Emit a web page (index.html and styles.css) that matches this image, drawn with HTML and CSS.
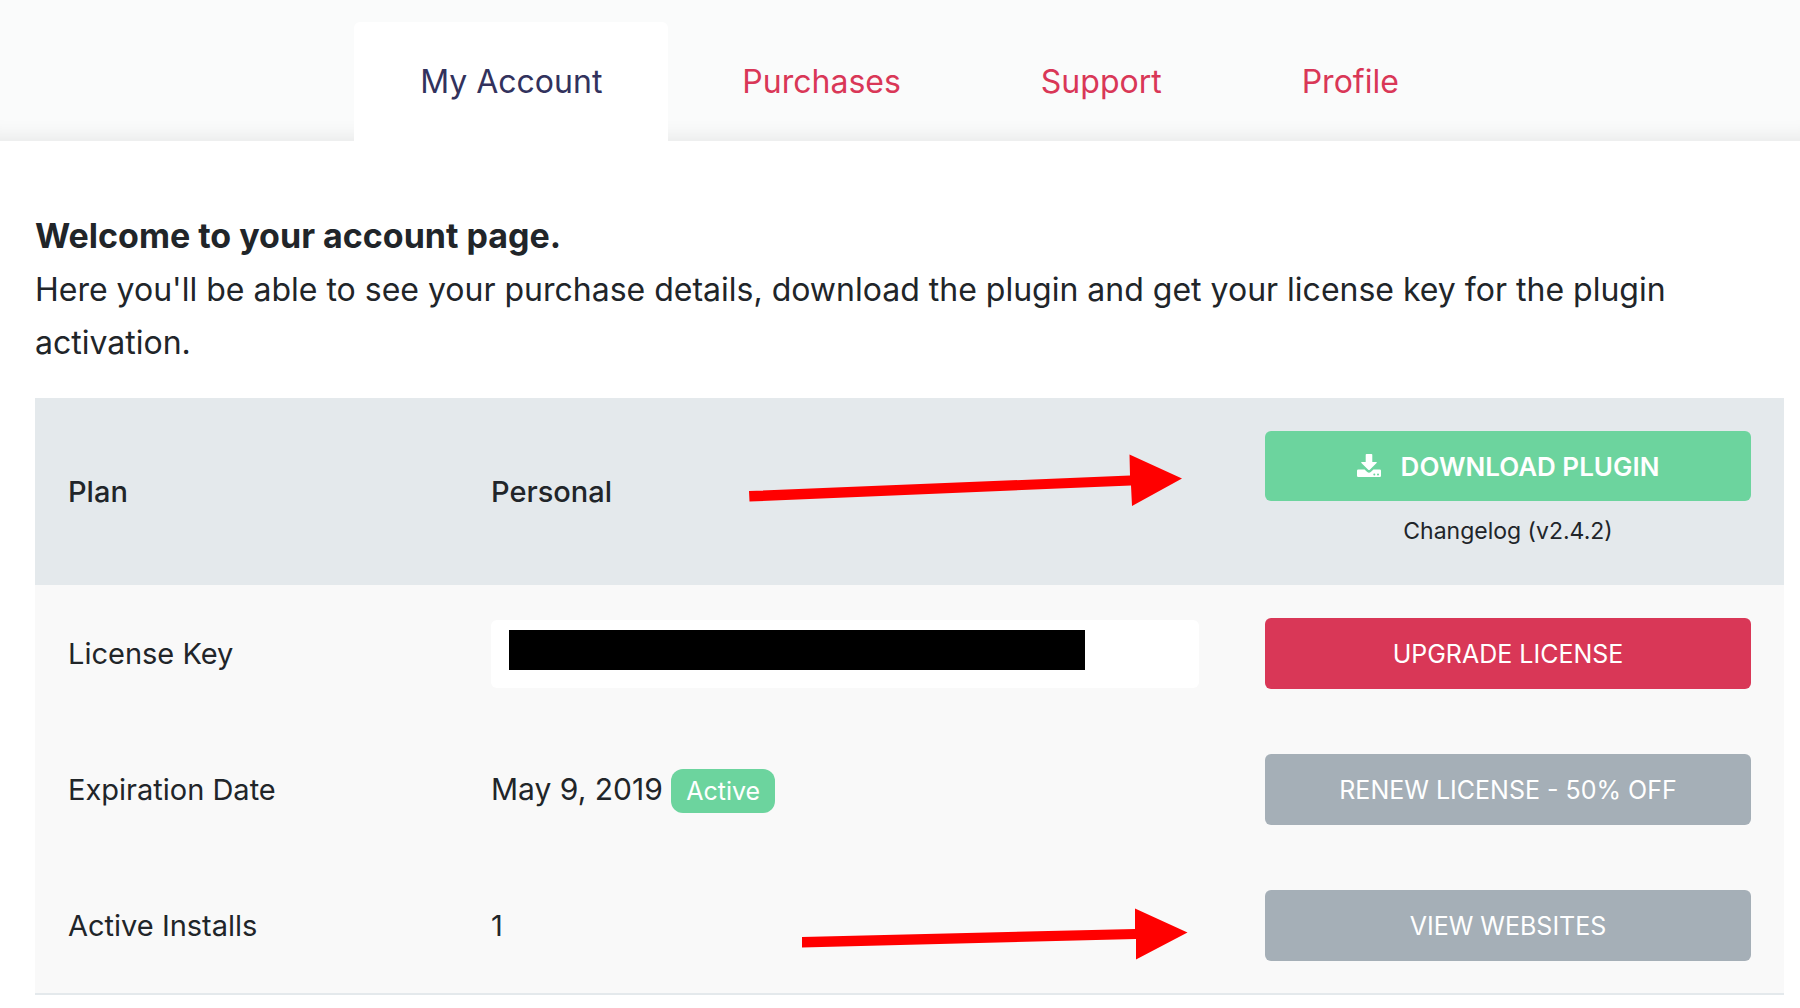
FILE: index.html
```html
<!DOCTYPE html>
<html lang="en">
  <head>
    <meta charset="utf-8">
    <title>My Account</title>
    <link rel="stylesheet" href="styles.css">
  </head>
  <body>
    <header class="header">
      <nav class="tabs">
        <a class="tab active" href="#account">My Account</a>
        <a class="tab" href="#purchases">Purchases</a>
        <a class="tab" href="#support">Support</a>
        <a class="tab" href="#profile">Profile</a>
      </nav>
    </header>

    <main class="content">
      <p class="intro">
        <strong>Welcome to your account page.</strong><br>
        Here you'll be able to see your purchase details, download the plugin and get your license key for the plugin activation.
      </p>

      <table class="license">
        <thead>
          <tr>
            <th class="col-name" scope="col">Plan</th>
            <th scope="col">
              Personal
              <svg class="arrow arrow-download" width="434" height="52" viewBox="0 0 434 52" aria-hidden="true">
                <path d="M0 37 L381 21.5 L380.5 0.5 L433 24.5 L383 52 L382 31.5 L0.5 47.5 Z"/>
              </svg>
            </th>
            <th class="col-action" scope="col">
              <button type="button" class="btn btn-success">
                <svg class="icon" width="24" height="24" viewBox="0 0 24 24" aria-hidden="true">
                  <path fill-rule="evenodd" d="M9.5 0h5q.8 0 .8.8V8h3.9q1.1 0 .4.9l-6.8 6.8q-.8.8-1.6 0L4.4 8.9q-.7-.9.4-.9h3.9V.8q0-.8.8-.8ZM1.2 15.5h6.4l2.6 2.5q1.8 1.6 3.6 0l2.6-2.5h6.4q1.2 0 1.2 1.2v5.1q0 1.2-1.2 1.2H1.2Q0 23 0 21.8v-5.1q0-1.2 1.2-1.2ZM17.3 19.6a1 1 0 1 0 0 2 1 1 0 1 0 0-2ZM21 19.6a1 1 0 1 0 0 2 1 1 0 1 0 0-2Z"/>
                </svg>
                DOWNLOAD PLUGIN
              </button>
              <a class="changelog" href="#changelog">Changelog (v2.4.2)</a>
            </th>
          </tr>
        </thead>
        <tbody>
          <tr>
            <td><label for="license-key">License Key</label></td>
            <td>
              <div class="key-field">
                <input type="text" id="license-key" readonly>
                <span class="key-mask"></span>
              </div>
            </td>
            <td><button type="button" class="btn btn-primary">UPGRADE LICENSE</button></td>
          </tr>
          <tr>
            <td>Expiration Date</td>
            <td class="date">May 9, 2019 <span class="badge">Active</span></td>
            <td><button type="button" class="btn btn-secondary">RENEW LICENSE - 50% OFF</button></td>
          </tr>
          <tr>
            <td>Active Installs</td>
            <td>
              1
              <svg class="arrow arrow-websites" width="386" height="52" viewBox="0 0 386 52" aria-hidden="true">
                <path d="M0 29 L333 21 L333 0.5 L385.5 24.5 L334 51.5 L334 31 L0 39.5 Z"/>
              </svg>
            </td>
            <td><button type="button" class="btn btn-secondary">VIEW WEBSITES</button></td>
          </tr>
        </tbody>
      </table>
    </main>
  </body>
</html>
```
FILE: styles.css
```css
* {
  box-sizing: border-box;
}

body {
  margin: 0;
  background: #fff;
  color: #212529;
  font-family: Inter, Roboto, "Liberation Sans", sans-serif;
  font-size: 32px;
  line-height: 53px;
}

a {
  color: #d93757;
  text-decoration: none;
}

/* Tabs */
.header {
  padding: 22px 16px 0 35px;
  background: #fafbfb;
  box-shadow: inset 0 -24px 20px -20px rgba(0, 0, 0, 0.08);
}

.tabs {
  display: flex;
  justify-content: center;
  gap: 8px;
}

.tab {
  padding: 33px 66px;
  border-radius: 6px 6px 0 0;
}

.tab.active {
  background: #fff;
  color: #32325d;
}

.content {
  padding: 68px 16px 0 35px;
}

.intro {
  margin: 0 0 29px;
}

.intro strong {
  font-size: 34px;
}

/* License table */
.license {
  width: 100%;
  table-layout: fixed;
  border-collapse: separate;
  border-spacing: 0;
  border-bottom: 2px solid #e4e9ec;
  background: #f9f9f9;
  font-size: 29px;
  line-height: 44px;
}

.license th,
.license td {
  position: relative;
  padding: 33px 33px 32px;
  text-align: left;
  vertical-align: middle;
}

.license th {
  background: #e4e9ec;
  font-weight: 500;
}

.license .date {
  font-size: 30px;
}

.col-name {
  width: 423px;
}

.col-action {
  width: 552px;
}

.btn {
  display: flex;
  align-items: center;
  justify-content: center;
  gap: 20px;
  width: 100%;
  height: 71px;
  padding: 0;
  border: 0;
  border-radius: 6px;
  color: #fff;
  font-family: inherit;
  font-size: 25px;
  cursor: pointer;
}

.btn-success {
  height: 70px;
  background: #6cd49e;
  font-size: 26px;
  font-weight: 600;
}

.btn-primary {
  background: #d93757;
}

.btn-secondary {
  background: #a5afb7;
}

.icon {
  fill: #fff;
}

.changelog {
  display: block;
  margin-top: 8px;
  color: #212529;
  font-size: 23px;
  font-weight: 400;
  text-align: center;
}

.key-field {
  position: relative;
}

.key-field input {
  display: block;
  width: 100%;
  height: 68px;
  padding: 0 18px;
  border: 0;
  border-radius: 6px;
  background: #fff;
  font: inherit;
}

.key-mask {
  position: absolute;
  top: 10px;
  left: 18px;
  width: 576px;
  height: 40px;
  background: #000;
}

.badge {
  display: inline-block;
  padding: 0 15px;
  border-radius: 12px;
  background: #6cd49e;
  color: #fff;
  font-size: 25px;
}

/* Arrows drawn over the table */
.arrow {
  position: absolute;
  fill: #f00;
}

.arrow-download {
  top: 56px;
  right: 49px;
}

.arrow-websites {
  top: 51px;
  right: 44px;
}
```
